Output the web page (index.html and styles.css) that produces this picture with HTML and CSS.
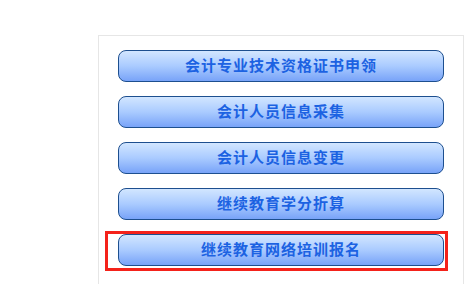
FILE: index.html
```html
<!DOCTYPE html>
<html lang="zh">
<head>
<meta charset="utf-8">
<link rel="stylesheet" href="styles.css">
</head>
<body>
<div class="panel">
  <div class="menu">
    <a class="btn">会计专业技术资格证书申领</a>
    <a class="btn">会计人员信息采集</a>
    <a class="btn">会计人员信息变更</a>
    <a class="btn">继续教育学分折算</a>
    <div class="highlight"><a class="btn">继续教育网络培训报名</a></div>
  </div>
</div>
</body>
</html>
```
FILE: styles.css
```css
html, body {
  margin: 0;
  padding: 0;
  background: #ffffff;
}
body {
  font-family: "Noto Sans CJK SC", "Liberation Sans", sans-serif;
}
.panel {
  margin: 35px 0 0 98px;
  width: 364px;
  height: 260px;
  border: 1px solid #e6e6e6;
  border-bottom: none;
  box-sizing: content-box;
}
.menu {
  display: flex;
  flex-direction: column;
  gap: 14px;
  padding: 14px 0 0 19px;
}
.btn {
  display: flex;
  align-items: center;
  justify-content: center;
  width: 326px;
  height: 32px;
  box-sizing: border-box;
  border: 1px solid #1d4f8f;
  border-radius: 8px;
  background: linear-gradient(to bottom, #d2e6ff 0%, #aacbff 50%, #78a3f8 100%);
  color: #1c62e2;
  font-size: 15px;
  font-weight: bold;
  letter-spacing: 1px;
  padding-bottom: 3px;
  text-decoration: none;
}
.highlight {
  margin: -3px 0 0 -13px;
  width: 343px;
  box-sizing: border-box;
  border: 3px solid #f4221a;
  padding: 0 1px 2px 10px;
}
```
